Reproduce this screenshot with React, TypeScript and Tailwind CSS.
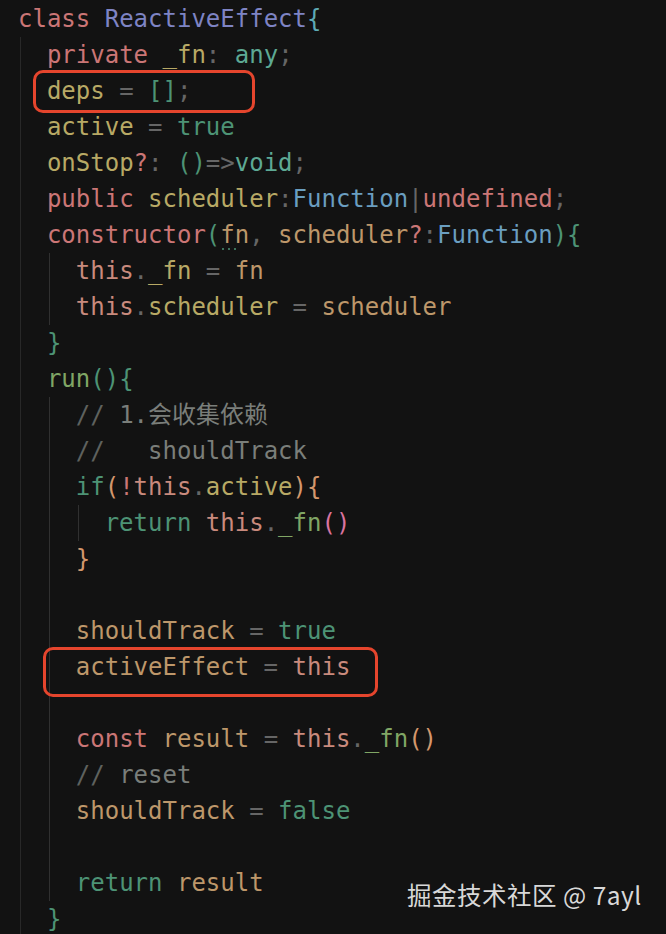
import React from 'react';

type Tok = [string, string];

const kw = 'text-[#cb7676]';
const cls = 'text-[#7e84c4]';
const b1 = 'text-[#5eaab5]';
const b2 = 'text-[#4d9375]';
const b3 = 'text-[#d4976c]';
const b4 = 'text-[#d9739f]';
const prop = 'text-[#b8a965]';
const vr = 'text-[#bd976a]';
const pn = 'text-[#666666]';
const ty = 'text-[#5da994]';
const fnT = 'text-[#6a9ec0]';
const lit = 'text-[#4d9375]';
const self = 'text-[#c98a7d]';
const call = 'text-[#80a665]';
const cm = 'text-[#5e615e]';
const cmT = 'text-[#7a7e7a]';

// guides = number of indent guides drawn before the code on that line
const lines: { guides: number; toks: Tok[]; hint?: boolean }[] = [
  { guides: 0, toks: [['class', kw], [' ', pn], ['ReactiveEffect', cls], ['{', b1]] },
  { guides: 1, toks: [['private', kw], [' ', pn], ['_fn', prop], [':', pn], [' ', pn], ['any', ty], [';', pn]] },
  { guides: 1, toks: [['deps', prop], [' = ', pn], ['[]', b2], [';', pn]] },
  { guides: 1, toks: [['active', prop], [' = ', pn], ['true', lit]] },
  { guides: 1, toks: [['onStop', prop], ['?', kw], [':', pn], [' ', pn], ['()', b2], ['=>', pn], ['void', ty], [';', pn]] },
  { guides: 1, toks: [['public', kw], [' ', pn], ['scheduler', prop], [':', pn], ['Function', fnT], ['|', pn], ['undefined', kw], [';', pn]] },
  { guides: 1, hint: true, toks: [['constructor', kw], ['(', b2], ['fn', vr], [',', pn], [' ', pn], ['scheduler', vr], ['?', kw], [':', pn], ['Function', fnT], [')', b2], ['{', b2]] },
  { guides: 2, toks: [['this', self], ['.', pn], ['_fn', prop], [' = ', pn], ['fn', vr]] },
  { guides: 2, toks: [['this', self], ['.', pn], ['scheduler', prop], [' = ', pn], ['scheduler', vr]] },
  { guides: 1, toks: [['}', b2]] },
  { guides: 1, toks: [['run', call], ['()', b2], ['{', b2]] },
  { guides: 2, toks: [['//', cm], [' 1.会收集依赖', cmT]] },
  { guides: 2, toks: [['//', cm], ['   shouldTrack', cmT]] },
  { guides: 2, toks: [['if', lit], ['(', b3], ['!', kw], ['this', self], ['.', pn], ['active', prop], [')', b3], ['{', b3]] },
  { guides: 3, toks: [['return', lit], [' ', pn], ['this', self], ['.', pn], ['_fn', call], ['()', b4]] },
  { guides: 2, toks: [['}', b3]] },
  { guides: 2, toks: [] },
  { guides: 2, toks: [['shouldTrack', vr], [' = ', pn], ['true', lit]] },
  { guides: 2, toks: [['activeEffect', vr], [' = ', pn], ['this', self]] },
  { guides: 2, toks: [] },
  { guides: 2, toks: [['const', kw], [' ', pn], ['result', vr], [' = ', pn], ['this', self], ['.', pn], ['_fn', call], ['()', b3]] },
  { guides: 2, toks: [['//', cm], [' reset', cmT]] },
  { guides: 2, toks: [['shouldTrack', vr], [' = ', pn], ['false', lit]] },
  { guides: 2, toks: [] },
  { guides: 2, toks: [['return', lit], [' ', pn], ['result', vr]] },
  { guides: 1, toks: [['}', b2]] },
];

function Guide({ first }: { first: boolean }) {
  return (
    <span className="inline-block w-[2ch] h-[36px] align-top pl-[2px]">
      <span className={`block h-full w-px ${first ? 'bg-[#282828]' : 'bg-[#303030]'}`} />
    </span>
  );
}

export default function App() {
  return (
    <div className="relative w-[666px] h-[934px] overflow-hidden bg-[#121212]">
      <div
        className="pt-[1px] pl-[18px] text-[24px] leading-[36px]"
        style={{ fontFamily: '"DejaVu Sans Mono", "Noto Sans CJK SC", monospace' }}
      >
        {lines.map((l, i) => (
          <div key={i} className="h-[36px] whitespace-pre">
            {Array.from({ length: l.guides }).map((_, g) => (
              <Guide key={g} first={g === 0} />
            ))}
            {l.toks.map(([t, c], j) => (
              <span key={j} className={`relative ${c}`}>
                {t}
                {l.hint && t === 'fn' && (
                  <span className="absolute left-[2px] top-[27px] flex gap-[4px]">
                    <span className="w-[2px] h-[2px] rounded-full bg-[#4d9375]" />
                    <span className="w-[2px] h-[2px] rounded-full bg-[#4d9375]" />
                    <span className="w-[2px] h-[2px] rounded-full bg-[#4d9375]" />
                  </span>
                )}
              </span>
            ))}
          </div>
        ))}
      </div>

      {/* highlight boxes drawn over the code */}
      <div className="absolute left-[33px] top-[70px] w-[222px] h-[43px] rounded-[10px] border-[3px] border-[#e5452d]" />
      <div className="absolute left-[43px] top-[647px] w-[335px] h-[50px] rounded-[10px] border-[3px] border-[#e5452d]" />

      <div
        className="absolute left-[407px] top-[878px] text-[24.5px] tracking-[0.5px] leading-[34px] text-[#d8d8d8] whitespace-pre"
        style={{ fontFamily: '"Noto Sans CJK SC", "Noto Sans", sans-serif' }}
      >
        掘金技术社区 @ 7ayl
      </div>
    </div>
  );
}
